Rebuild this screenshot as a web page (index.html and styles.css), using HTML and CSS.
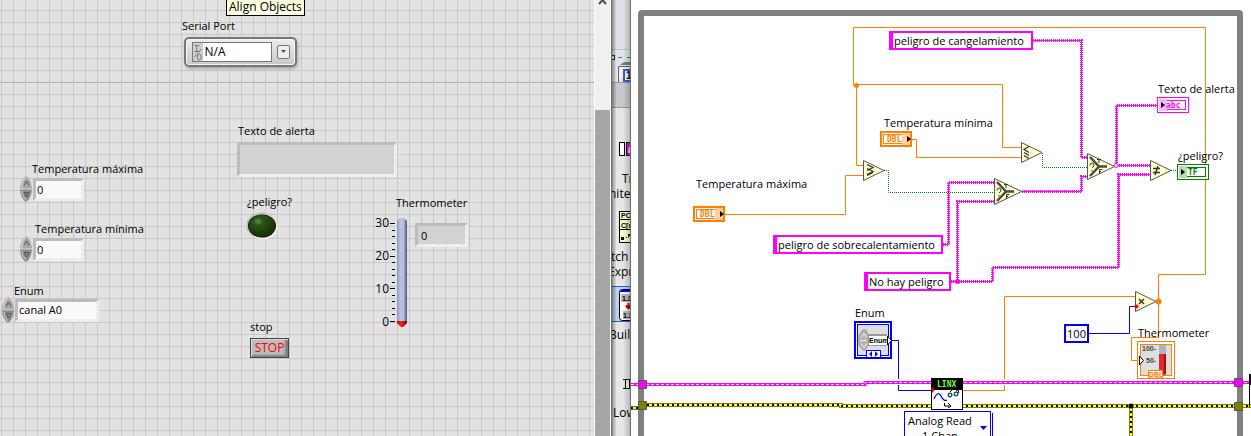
FILE: index.html
```html
<!DOCTYPE html>
<html lang="es">
<head>
<meta charset="utf-8">
<title>Serial Port</title>
<link rel="stylesheet" href="styles.css">
</head>
<body>
<main class="workspace">
  <section class="front-panel">
    <div class="tooltip">Align Objects</div>

    <label class="label at-serial-label" for="serial">Serial Port</label>
    <div class="serial">
      <svg class="io-glyph" viewBox="0 0 9 18" aria-hidden="true"><path d="M1 2.500h5M1 8.500h5M3.500 2v6M8 6L1 14" fill="none" stroke="#777"/><ellipse cx="6" cy="14" rx="2" ry="3" fill="none" stroke="#777"/></svg>
      <select id="serial" class="serial-field"><option>N/A</option></select>
      <button class="serial-arrow" type="button" aria-label="Serial Port"><svg viewBox="0 0 7 4"><path d="M1 0h5L3.500 3z" fill="#555"/></svg></button>
    </div>

    <label class="label at-max-label" for="tmax">Temperatura máxima</label>
    <div class="numeric at-max">
      <svg class="spinner" viewBox="0 0 12 26" aria-hidden="true"><use href="#spin"/></svg>
      <input id="tmax" class="sunken field" value="0">
    </div>

    <label class="label at-min-label" for="tmin">Temperatura mínima</label>
    <div class="numeric at-min">
      <svg class="spinner" viewBox="0 0 12 26" aria-hidden="true"><use href="#spin"/></svg>
      <input id="tmin" class="sunken field" value="0">
    </div>

    <label class="label at-enum-label" for="enum">Enum</label>
    <div class="numeric at-enum">
      <svg class="spinner" viewBox="0 0 12 26" aria-hidden="true"><use href="#spin"/></svg>
      <select id="enum" class="sunken field field-wide"><option>canal A0</option></select>
    </div>

    <label class="label at-alert-label" for="alert">Texto de alerta</label>
    <input id="alert" class="sunken readout alert" readonly>

    <span class="label at-led-label">¿peligro?</span>
    <svg class="led" viewBox="0 0 36 30" aria-hidden="true">
      <defs>
        <radialGradient id="ledfill" cx=".35" cy=".3" r=".75"><stop offset="0" stop-color="#668a52"/><stop offset=".25" stop-color="#2b5518"/><stop offset="1" stop-color="#123000"/></radialGradient>
        <linearGradient id="ring" x1="0" y1="0" x2="1" y2="1"><stop offset="0" stop-color="#a8a8a8"/><stop offset=".5" stop-color="#d6d6d6"/><stop offset="1" stop-color="#fff"/></linearGradient>
      </defs>
      <ellipse cx="18" cy="15" rx="16" ry="13.500" fill="url(#ring)"/>
      <ellipse cx="18" cy="15" rx="14" ry="11.500" fill="#0c1d04"/>
      <ellipse cx="18" cy="14.700" rx="13" ry="10.700" fill="url(#ledfill)"/>
    </svg>

    <label class="label at-therm-label" for="therm">Thermometer</label>
    <div class="scale"><span>30</span><span>20</span><span>10</span><span>0</span></div>
    <svg class="tube" viewBox="0 0 20 112" aria-hidden="true">
      <defs>
        <linearGradient id="glass"><stop offset="0" stop-color="#8794b8"/><stop offset=".3" stop-color="#b9c4e4"/><stop offset=".65" stop-color="#b4bfdf"/><stop offset="1" stop-color="#4f566c"/></linearGradient>
        <linearGradient id="bulb"><stop offset="0" stop-color="#c00000"/><stop offset=".4" stop-color="#ff2020"/><stop offset="1" stop-color="#700000"/></linearGradient>
      </defs>
      <path d="M0 6.500h5M0 39.500h5M0 71.500h5M0 104.500h5M2 13.500h3M2 19.500h3M2 26.500h3M2 32.500h3M2 45.500h3M2 52.500h3M2 58.500h3M2 65.500h3M2 78.500h3M2 84.500h3M2 91.500h3M2 97.500h3" stroke="#000"/>
      <path d="M7 104V5q0-2 2-3l2-1h2l2 1q2 1 2 3v99z" fill="url(#glass)"/>
      <path d="M7 104h10v2l-4 4h-2l-4-4z" fill="url(#bulb)"/>
    </svg>
    <input id="therm" class="sunken readout digital" value="0" readonly>

    <label class="label at-stop-label" for="stop">stop</label>
    <button id="stop" class="stop" type="button">STOP</button>
  </section>

  <div class="scrollbar">
    <svg viewBox="0 0 15 12" aria-hidden="true"><path d="M4 4L7.500 0L11 4" fill="none" stroke="#505050" stroke-width="2"/></svg>
    <div class="thumb"></div>
  </div>

  <aside class="palette">
    <svg class="palette-art" width="20" height="436" viewBox="0 0 20 436">
      <rect width="20" height="49" fill="#dfe1e5"/>
      <rect y="49" width="20" height="1" fill="#c4c4c4"/>
      <rect y="50" width="20" height="32" fill="#e3e4e6"/>
      <path d="M7 57.500h4M16 57.500h4" stroke="#1681d8"/>
      <rect x="-.5" y="55.500" width="4" height="4" fill="#fff" stroke="#333"/>
      <path d="M9 65l4-3h7v3z" fill="#808080"/>
      <path d="M7.500 82V66.500H20" fill="#f2f2f2" stroke="#666"/>
      <rect x="13" y="70" width="12" height="11" fill="#fff" stroke="#2f5fe8" stroke-width="2"/>
      <text x="15" y="79" class="tiny-text">1</text>
      <rect y="82" width="20" height="26" fill="#c9c9c9"/>
      <path d="M0 82.500h20M0 107.500h20" stroke="#999"/>
      <rect y="108" width="20" height="328" fill="#e7e7e7"/>
      <rect x="8.500" y="142.500" width="5" height="13" fill="#fff" stroke="#000"/>
      <rect x="15.500" y="142.500" width="8" height="13" fill="#f0f" stroke="#000"/>
      <text x="17" y="153" class="tiny-text white">a</text>
      <text x="11" y="183" class="palette-text">Tr</text>
      <text x="-2" y="198" class="palette-text">nites</text>
      <rect x="8.500" y="211.500" width="16" height="31" fill="#ffc"  stroke="#000"/>
      <path d="M8 219.500h12M8 229.500h12" stroke="#000"/>
      <text x="10" y="218" class="micro-text">PC</text>
      <text x="10" y="228" class="micro-text">C[r</text>
      <path d="M10 237h3v3h-3zM15 237h1v1h-1zM17 238v-4h3" fill="#000"/>
      <text x="0" y="261" class="palette-text">tch</text>
      <text x="-3" y="276" class="palette-text">Expre</text>
      <rect x="-2" y="286.500" width="24" height="35" fill="#bcd2ea" stroke="#2c5fd0"/>
      <rect x="8.500" y="289.500" width="20" height="31" rx="3" fill="#fff" stroke="#000"/>
      <path d="M10 290h10v2H9z" fill="#00f"/>
      <path d="M10 294h10v8H10zM12 311h8v8h-8z" fill="#bbb"/>
      <text x="11" y="301" class="micro-text">1.3</text>
      <text x="12" y="318" class="micro-text">1.3</text>
      <path d="M17.500 303v5M15 305.500l2.500 3l2.500-3" fill="none" stroke="#c00000" stroke-width="2"/>
      <text x="-2" y="339" class="palette-text">Build</text>
      <path d="M12 379.500h8M12 388.500h8M14.500 380v8M18.500 380v8" stroke="#000"/>
      <path d="M15 380h3v8h-3z" fill="#ffc"/>
      <text x="2" y="417" class="palette-text">Low</text>
    </svg>
  </aside>

  <section class="diagram">
    <div class="loop-frame"></div>
    <svg class="wires" width="620" height="436" viewBox="631 0 620 436" aria-hidden="true">
      <defs>
        <g id="spin">
          <path d="M0 12.500Q1 3 6 0q5 3 6 12.500z" fill="#a8a8a8"/><path d="M0 13.500Q1 23 6 26q5-3 6-12.500z" fill="#8c8c8c"/>
          <path d="M2 12Q2 4 6 1" fill="none" stroke="#ddd"/><path d="M2 15q0 5 4 9" fill="none" stroke="#ccc"/>
          <path d="M4 9.500L6.500 5L9 9.500M4 16.500h5L6.500 21z" fill="none" stroke="#555"/>
        </g>
        <g id="tri"><path d="M.5.500v20L21 10.500z" fill="#ffc" stroke="#555"/></g>
        <g id="select"><path d="M.5.500v26L27.500 13.500z" fill="#ffc" stroke="#555" /><path d="M3 4L12 13.500L3 23M12 13.500h8" fill="none" stroke="#4a4840" stroke-width="2.500"/><path d="M3 12.500q0-2.500 2-2.500t2 2t-2 3M5 17v1.500" fill="none" stroke="#333"/><path d="M10 6.500h4M12 6v4M12.500 21v-4.500h3M12 18.500h2" fill="none" stroke="#333"/></g>
        <g id="dbl"><rect x="1" y="1" width="30" height="14" fill="#fff" stroke="#ff8000" stroke-width="2"/><rect x="3.500" y="3.500" width="25" height="9" fill="#fff" stroke="#ff8000"/><path d="M22 2h8v12h-8z" fill="#ffcfa0"/><path d="M27 5l4 3l-4 3z"/></g>
        <path id="strings" d="M1033 40.500H1081.500V157.500H1087M943 244.500H948.500V182.500H994M951 281.500H957.500V201.500H994M957 281.500H992.500V267.500H1118.500V174.500H1150M1022 191.500H1081.500V176.500H1087M1115 165.500H1150M1116.500 165V105.500H1157"/>
      </defs>

      <g class="wire">
        <use href="#strings" class="cord"/>
        <use href="#strings" class="teeth"/>
      </g>
      <circle cx="957.500" cy="281.500" r="2.500" fill="#f0f"/>
      <circle cx="1116" cy="165.500" r="2" fill="#fff" stroke="#f0f"/>

      <path class="wire green" d="M884 170.500H888.500V192.500H994M1042.500 153V167.500H1087M1171 170.500H1177"/>

      <path class="wire orange" d="M856 85.500H853.500V27.500H1205.500V274.500H1158.500V337.500H1131.500V360.500H1138M856 84.500H1002.500V147.500H1021M856.500 85V165.500H863M912 139.500H916.500V157.500H1021M725 214.500H845.500V175.500H863M963 390.500H1004.500V296.500H1135"/>
      <circle cx="856.500" cy="85.500" r="2.500" fill="#ff8000"/>
      <circle cx="1158.500" cy="301.500" r="3" fill="#ff8000"/>
      <path class="wire blue" d="M892 340.500H898.500V390.500H931M1089 333.500H1129.500V306.500H1135"/>
      <path d="M896 382h5M1002 382h5" stroke="#fff" stroke-width="6"/>

      <path d="M631 384.500H865V382.500H1251" fill="none" stroke="#f0f" stroke-width="3"/>
      <path d="M631 384.500H865V382.500H1251" fill="none" stroke="#fff" stroke-dasharray="3 2"/>
      <g fill="none">
        <path d="M631 408H639M647 405H841V406H1251M1131 406V436" stroke="#808000" stroke-width="4"/>
        <path d="M631 408H639M647 405H841V406H1251M1131 406V436" stroke="#ff3" stroke-width="2"/>
        <path d="M631 408H639M647 405H841V406H1251M1131 406V436" stroke="#000" stroke-width="2" stroke-dasharray="2 3"/>
      </g>
      <circle cx="1131" cy="406" r="2.500" fill="#000"/>
      <g stroke="#555">
        <path d="M638.500 380.500h8v8h-8zM1234.500 378.500h8v8h-8z" fill="#f0f"/>
        <path d="M638.500 401.500h8v8h-8zM1234.500 402.500h8v8h-8z" fill="#808000"/>
      </g>
      <path d="M1249 374h2v11h-2zM1249 385h1v22h-1z"/>

      <use href="#tri" x="863" y="160"/><path d="M867 164.500l6 3l-6 3M867 168.500l6 3l-6 3M867 175.500l6-3" fill="none" stroke="#333" stroke-width="1.300"/>
      <use href="#tri" x="1021" y="142"/><path d="M1029 146.500l-5 3l5 3M1024 152.500l5 3M1024 155.500l5 3" fill="none" stroke="#333" stroke-width="1.300"/>
      <use href="#tri" x="1150" y="160"/><path d="M1153 168.500h7M1153 172.500h7M1158 166l-3 9" fill="none" stroke="#333" stroke-width="1.500"/>
      <use href="#tri" x="1135" y="291"/><path d="M1139 299l5 5M1144 299l-5 5" fill="none" stroke="#333" stroke-width="1.500"/>
      <circle cx="1136.500" cy="306.500" r="2" fill="#f00"/>
      <use href="#select" x="994" y="178"/>
      <use href="#select" x="1087" y="153"/>

      <use href="#dbl" x="880" y="131"/><text x="887" y="142" class="type-text orange-text">DBL</text>
      <use href="#dbl" x="693" y="206"/><text x="700" y="217" class="type-text orange-text">DBL</text>
      <g><rect x="1157.500" y="97.500" width="31" height="15" fill="#fff" stroke="#f0f"/><rect x="1160.500" y="100.500" width="25" height="9" fill="#fff" stroke="#f0f"/><path d="M1159 99h8v12h-8z" fill="#ffb5ff"/><path d="M1161 102v6l4-3z"/><text x="1166" y="108" class="type-text pink-text">abc</text></g>
      <g><rect x="1177.500" y="164.500" width="31" height="15" fill="#fff" stroke="#008000"/><rect x="1180.500" y="167.500" width="25" height="9" fill="#fff" stroke="#008000"/><path d="M1179 166h8v12h-8z" fill="#b5dab5"/><path d="M1181 169v6l4-3z"/><text x="1188" y="175" class="type-text green-text">TF</text></g>

      <g>
        <rect x="855" y="322" width="36" height="36" fill="#fff" stroke="#00f" stroke-width="2"/>
        <rect x="857.500" y="324.500" width="31" height="31" fill="#dedede" stroke="#00f"/>
        <path d="M863 330h3l2 5v10l-3 5h-2l-4-5v-10z" fill="#b5b5b5" stroke="#999"/>
        <path d="M860 340.500h7M861 337.500l3-4l3 4M861 343.500l3 4l3-4" stroke="#eee" fill="none"/>
        <path d="M868 334h19v12h-19z" fill="#999"/><path d="M869 336h18v9h-18z" fill="#fff"/>
        <text x="869" y="343" class="icon-text">Enum</text>
        <path d="M887.500 336v9l4-4.500z" fill="#fff" stroke="#000"/>
        <rect x="866.500" y="350.500" width="14" height="7" fill="#fff" stroke="#00f"/><path d="M872 351v6l-3-3zM875 351v6l3-3z" fill="#00f"/>
      </g>

      <g>
        <rect x="931.500" y="378.500" width="31" height="31" fill="#fff" stroke="#000"/>
        <path d="M931 378h32v12h-32z"/>
        <text x="937" y="387" class="linx-text">LINX</text>
        <path d="M932 387v6l3-3z" fill="#f00"/>
        <path d="M934 399q4-9 7-3t6 4" fill="none" stroke="#00f" stroke-width="1.300"/>
        <circle cx="950" cy="395" r="2" fill="#9ff" stroke="#000"/><circle cx="956" cy="394" r="2" fill="#9ff" stroke="#000"/>
        <path d="M950 392l2-2M956 391l2-1l1 3M944.500 403v3h6M948 403l3 3l-3 2" fill="none" stroke="#000"/>
      </g>

      <g>
        <rect x="1137.500" y="341.500" width="37" height="37" fill="#fff" stroke="#ff8000"/>
        <rect x="1140.500" y="344.500" width="31" height="31" fill="#dedede" stroke="#ff8000"/>
        <path d="M1159 345h7v9h-7z" fill="#aab2d0"/><path d="M1159 354h7v20l-3 1h-4z" fill="#e02828"/><path d="M1164 354h2v20l-2 1z" fill="#981414"/>
        <text x="1142" y="351" class="icon-text scale-text">100-</text><text x="1146" y="363" class="icon-text scale-text">50-</text>
        <path d="M1139.500 356v9l4-4.500z" fill="#fff" stroke="#000"/>
        <path d="M1148.500 378V370.500h14V378z" fill="#fff" stroke="#ff8000"/><text x="1149" y="377" class="icon-text orange-text">DBL</text>
      </g>
    </svg>

    <input class="constant at-cold" value="peligro de cangelamiento" aria-label="peligro de cangelamiento">
    <input class="constant at-hot" value="peligro de sobrecalentamiento" aria-label="peligro de sobrecalentamiento">
    <input class="constant at-safe" value="No hay peligro" aria-label="No hay peligro">
    <input class="constant number at-hundred" value="100" aria-label="100">
    <span class="label at-d-min">Temperatura mínima</span>
    <span class="label at-d-max">Temperatura máxima</span>
    <span class="label at-d-alert">Texto de alerta</span>
    <span class="label at-d-led">¿peligro?</span>
    <span class="label at-d-enum">Enum</span>
    <span class="label at-d-therm">Thermometer</span>
    <button class="analog" type="button"><span>Analog Read<br>1 Chan</span><svg viewBox="0 0 7 4" aria-hidden="true"><path d="M0 0h7L3.500 4z" fill="#00f"/></svg></button>
  </section>
</main>
</body>
</html>
```
FILE: styles.css
```css
* { box-sizing: border-box; }
body { margin: 0; background: #fff; color: #000; font: 11px/16px "Open Sans", "Noto Sans", sans-serif; }
input, select, button { margin: 0; font: inherit; color: inherit; border-radius: 0; appearance: none; }

.workspace { display: flex; min-height: 100vh; overflow: hidden; }
.front-panel {
  position: relative; flex: 594 1 0; overflow: hidden;
  background-color: #e2e2e2;
  background-image: linear-gradient(#b0b0b0, #b0b0b0), linear-gradient(90deg, #c8c8c8 1px, transparent 1px), linear-gradient(#c8c8c8 1px, transparent 1px);
  background-size: 100% 1px, 12px 12px, 12px 12px;
  background-position: 0 82px, 1px 0, 0 10px;
  background-repeat: no-repeat, repeat, repeat;
}
.diagram { position: relative; flex: 620 1 0; overflow: hidden; background: #fff; }
.wires { position: absolute; left: 0; top: 0; }
.loop-frame { position: absolute; inset: 10px 8px -10px 7px; border: 6px solid #808080; border-radius: 4px 4px 0 0; }

/* scrollbar and palette */
.scrollbar { flex: 0 0 17px; display: flex; flex-direction: column; background: #f0f0f0; border: solid #fff; border-width: 0 1px; }
.scrollbar svg { height: 12px; margin-bottom: 98px; }
.thumb { flex: 1; background: #a6a6a6; }
.palette { position: relative; flex: 0 0 20px; overflow: hidden; background: #e7e7e7; }
.palette-art { display: block; }
.palette::after { content: ""; position: absolute; inset: 0; border: solid #707070; border-width: 0 1px; background: linear-gradient(90deg, rgba(0,0,0,.4), transparent 25%, transparent 60%, rgba(0,0,0,.2)); }
.palette-text { font-size: 12px; }
.tiny-text { font: bold 10px "Liberation Sans", sans-serif; }
.micro-text { font: bold 7px "Liberation Sans", sans-serif; }
.white { fill: #fff; }

/* shared parts */
.label { position: absolute; white-space: nowrap; }
.tooltip { position: absolute; left: 226px; top: 0; padding: 0 2px 1px; border: 1px solid #000; border-top: 0; background: #ffffe1; font-size: 12px; line-height: 14px; white-space: nowrap; }
.numeric { position: absolute; display: flex; align-items: center; gap: 1px; }
.spinner { width: 12px; height: 26px; }
.sunken { border: 3px solid; border-color: #bcbcbc #eee #eee #bcbcbc; outline: none; }
.field { width: 51px; height: 23px; padding: 0 1px; background: #fafafa; line-height: 16px; }
.field-wide { width: 84px; }
.readout { position: absolute; background: #d2d2d2; }

/* front panel placement */
.at-serial-label { left: 182px; top: 18px; }
.serial { position: absolute; left: 184px; top: 37px; display: flex; align-items: center; width: 113px; height: 30px; padding: 0 5px 0 6px; border: 2px solid #777; border-radius: 5px; background: linear-gradient(#eee, #c8c8c8); box-shadow: 1px 2px 3px #aaa, inset 0 0 0 1px #f4f4f4; }
.io-glyph { width: 11px; height: 20px; background: #d0d0d0; border: 1px solid #777; border-right: 0; }
.serial-field { width: 72px; height: 20px; margin-right: 5px; padding: 0 2px; border: 1px solid #777; border-left: 0; background: #fff; font-size: 12px; }
.serial-arrow { display: grid; place-items: center; width: 14px; height: 14px; padding: 0; border: 1px solid #777; border-radius: 2px; background: #eee; }
.serial-arrow svg { width: 7px; height: 4px; }
.at-max-label { left: 32px; top: 161px; }
.at-max { left: 20px; top: 176px; }
.at-min-label { left: 35px; top: 221px; }
.at-min { left: 20px; top: 236px; }
.at-enum-label { left: 14px; top: 283px; }
.at-enum { left: 2px; top: 297px; }
.at-alert-label { left: 238px; top: 123px; }
.alert { left: 237px; top: 142px; width: 160px; height: 35px; }
.at-led-label { left: 247px; top: 194px; }
.led { position: absolute; left: 244px; top: 211px; width: 36px; height: 30px; }
.at-therm-label { left: 396px; top: 195px; }
.scale { position: absolute; left: 370px; top: 215px; display: grid; gap: 17px; width: 19px; font-size: 12px; text-align: right; }
.tube { position: absolute; left: 390px; top: 217px; width: 20px; height: 112px; }
.digital { left: 415px; top: 223px; width: 53px; height: 24px; padding: 0 3px; }
.at-stop-label { left: 250px; top: 319px; }
.stop { position: absolute; left: 250px; top: 338px; width: 39px; height: 20px; padding: 0; border: 1px solid #444; background: #bbb; box-shadow: inset 1px 1px 1px #ddd, inset -3px -2px 2px #808080; color: #f00; font-size: 12px; line-height: 18px; }

/* diagram placement */
.at-d-min { left: 253px; top: 115px; }
.at-d-max { left: 65px; top: 176px; }
.at-d-alert { left: 527px; top: 81px; }
.at-d-led { left: 547px; top: 148px; }
.at-d-enum { left: 224px; top: 305px; }
.at-d-therm { left: 507px; top: 325px; }
.constant { position: absolute; height: 19px; padding: 0 1px; border: 2px solid #f0f; border-left-width: 4px; background: #fff; outline: none; }
.at-cold { left: 258px; top: 31px; width: 144px; }
.at-hot { left: 142px; top: 235px; width: 170px; }
.at-safe { left: 233px; top: 272px; width: 87px; }
.number { border: 2px solid #00f; text-align: center; }
.at-hundred { left: 433px; top: 324px; width: 25px; padding: 0; }
.analog { position: absolute; left: 273px; top: 411px; display: flex; align-items: center; gap: 8px; padding: 1px 3px; border: 1px solid #00f; background: #fff; box-shadow: 1px 0 #fff, 2px 2px #00f; line-height: 15px; white-space: nowrap; }
.analog svg { width: 7px; height: 4px; }

/* wires and node text */
.wire { fill: none; }
.cord { stroke: #f0f; stroke-width: 1; }
.teeth { stroke: #f0f; stroke-width: 3; stroke-dasharray: 1 1; }
.green { stroke: #008000; stroke-dasharray: 1 1; }
.orange { stroke: #ff8000; }
.blue { stroke: #00f; }
.type-text { font: bold 8px "DejaVu Sans Mono", monospace; }
.icon-text { font: bold 7px "Liberation Sans", sans-serif; }
.linx-text { font: bold 8px "DejaVu Sans Mono", monospace; fill: #7f3; }
.scale-text { fill: #444; }
.orange-text { fill: #ff8000; }
.pink-text { fill: #f0f; }
.green-text { fill: #008000; }
```
